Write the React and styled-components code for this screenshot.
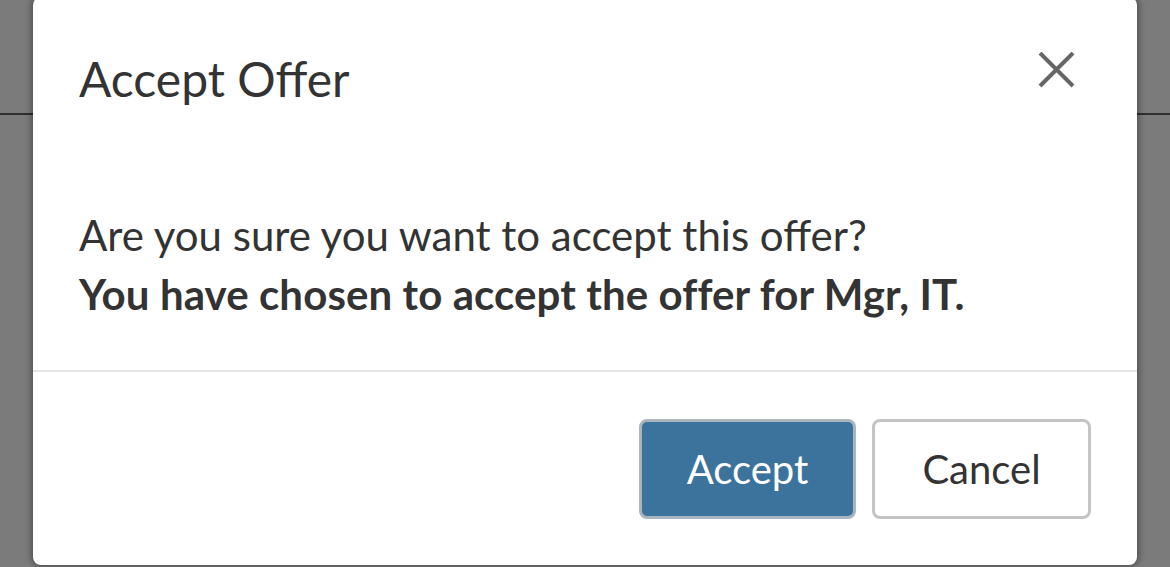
import React from 'react';
import styled, { createGlobalStyle } from 'styled-components';

const GlobalStyle = createGlobalStyle`
  html, body {
    margin: 0;
    padding: 0;
    background: #7b7b7b;
    overflow: hidden;
  }
  body {
    font-family: Lato, "Open Sans", sans-serif;
    color: #333;
  }
`;

const Page = styled.div`
  position: relative;
  width: 1170px;
  height: 567px;
  background: #7b7b7b;
`;

const PageHeader = styled.div`
  height: 113px;
  border-bottom: 2px solid #2f2f2f;
`;

const Modal = styled.div`
  position: absolute;
  left: 33px;
  top: -3px;
  width: 1104px;
  height: 568px;
  box-sizing: border-box;
  background: #fff;
  border-radius: 8px;
  box-shadow: 0 0 6px 2px rgba(0, 0, 0, 0.35);
  display: flex;
  flex-direction: column;
`;

const Header = styled.div`
  display: flex;
  justify-content: space-between;
  align-items: flex-start;
  padding: 50px 62px 0 46px;
`;

const Title = styled.h2`
  margin: 0;
  font-size: 48px;
  line-height: 64px;
  font-weight: 400;
  color: #333;
`;

const CloseButton = styled.button`
  margin-top: 5px;
  width: 37px;
  height: 36px;
  padding: 0;
  border: 0;
  background: transparent;
  cursor: pointer;
  display: flex;
  svg {
    display: block;
  }
`;

const Body = styled.div`
  padding: 95px 46px 46px;
  font-size: 42px;
  line-height: 59px;
  color: #333;
`;

const Line = styled.p`
  margin: 0;
  font-weight: ${(p) => (p.$bold ? 700 : 400)};
  letter-spacing: ${(p) => (p.$bold ? '0.1px' : '0')};
`;

const Footer = styled.div`
  border-top: 2px solid #e5e5e5;
  padding: 47px 46px 45px;
  display: flex;
  justify-content: flex-end;
  gap: 16px;
`;

const Button = styled.button`
  box-sizing: border-box;
  height: 100px;
  width: ${(p) => (p.$primary ? '217px' : '219px')};
  border-radius: 8px;
  border: 3px solid ${(p) => (p.$primary ? '#abb5bf' : '#c4c4c4')};
  background: ${(p) => (p.$primary ? '#3b739c' : '#fff')};
  color: ${(p) => (p.$primary ? '#fff' : '#333')};
  font-family: inherit;
  font-size: 40px;
  cursor: pointer;
`;

export default function App() {
  return (
    <Page>
      <GlobalStyle />
      <PageHeader />
      <Modal role="dialog">
        <Header>
          <Title>Accept Offer</Title>
          <CloseButton aria-label="Close">
            <svg width="37" height="36" viewBox="0 0 37 36">
              <path d="M2 1 L35 34 M35 1 L2 34" stroke="#666" strokeWidth="4" />
            </svg>
          </CloseButton>
        </Header>
        <Body>
          <Line>Are you sure you want to accept this offer?</Line>
          <Line $bold>You have chosen to accept the offer for Mgr, IT.</Line>
        </Body>
        <Footer>
          <Button $primary>Accept</Button>
          <Button>Cancel</Button>
        </Footer>
      </Modal>
    </Page>
  );
}
